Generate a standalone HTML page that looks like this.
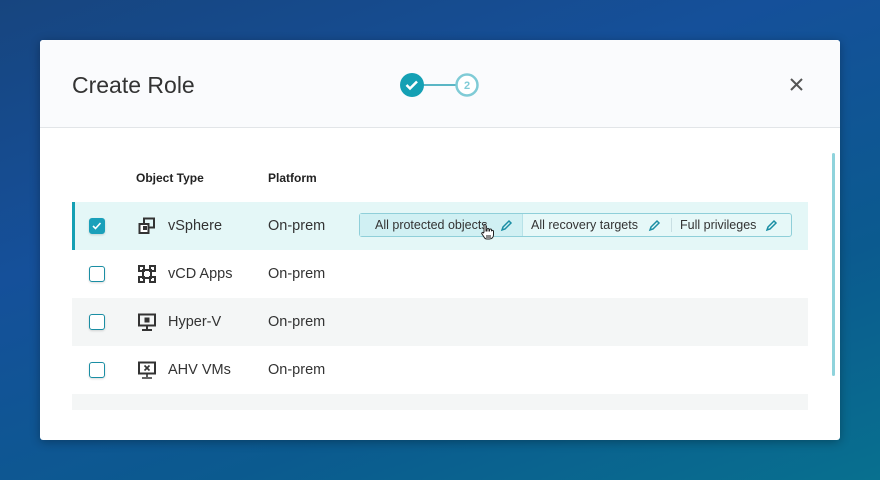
<!DOCTYPE html>
<html><head><style>
*{box-sizing:border-box;margin:0;padding:0}
body{width:880px;height:480px;overflow:hidden;font-family:"Liberation Sans",sans-serif;background:linear-gradient(160deg,#17457f 0%,#15509a 35%,#0b5a8f 70%,#08708f 100%);position:relative}
.modal{position:absolute;left:40px;top:40px;width:800px;height:400px;background:#fff;border-radius:3px;box-shadow:0 2px 10px rgba(0,0,0,.3);overflow:hidden}
.hdr{position:absolute;left:0;top:0;width:800px;height:88px;background:#fafbfd;border-bottom:1px solid #e2e5e8}
.title{position:absolute;left:32px;top:32px;font-size:23px;color:#333;font-weight:300}
.th{position:absolute;top:131px;font-size:12px;font-weight:bold;color:#222}
.row{position:absolute;left:32px;width:736px;height:48px}
.row .t{position:absolute;top:16px;font-size:14.5px;color:#333}
.cb{position:absolute;left:17px;top:16px;width:16px;height:16px;border:1.5px solid #1a8ea4;border-radius:3px;background:#fff;box-shadow:0 1px 2px rgba(0,0,0,.15)}
.ic{position:absolute;left:66px;top:15px}
.chips{position:absolute;left:287px;top:11px;width:433px;height:24px;border:1px solid #8fcfd9;border-radius:3px;font-size:12.5px;color:#333;background:#e6f8f8}
.chips span{position:absolute;top:4px}
</style></head><body>
<div class="modal">
 <div class="hdr">
  <div class="title">Create Role</div>
  <svg style="position:absolute;left:358px;top:31px" width="84" height="28">
   <line x1="24" y1="14" x2="58" y2="14" stroke="#5ab6c5" stroke-width="2"/>
   <circle cx="14" cy="14" r="12" fill="#14a0b4"/>
   <path d="M8.5 14l3.5 3.5 7-7" stroke="#fff" stroke-width="2.5" fill="none"/>
   <circle cx="69" cy="14" r="10.5" fill="#fff" stroke="#7fcbd6" stroke-width="2.5"/>
   <text x="69" y="18" text-anchor="middle" font-size="11" font-weight="bold" fill="#7fcbd6" font-family="Liberation Sans">2</text>
  </svg>
  <svg style="position:absolute;left:750px;top:38px" width="13" height="13"><path d="M1 1l11 11M12 1L1 12" stroke="#555" stroke-width="2"/></svg>
 </div>
 <div class="th" style="left:96px">Object Type</div>
 <div class="th" style="left:228px">Platform</div>

 <div class="row" style="top:162px;background:#e4f7f7;border-left:3px solid #14a0b4">
  <div class="cb" style="left:14px;background:#1aa0ba;border-color:#1aa0ba"><svg width="13" height="13" style="position:absolute;left:0;top:0"><path d="M3 7l2.5 2.5L10.5 4" stroke="#fff" stroke-width="1.6" fill="none"/></svg></div>
  <svg class="ic" style="left:63px" width="18" height="18"><rect x="6" y="1.5" width="10" height="9" fill="none" stroke="#333" stroke-width="2"/><rect x="1.5" y="7" width="9" height="9" fill="#fff" stroke="#333" stroke-width="2"/><rect x="5" y="9" width="4" height="4" fill="#333"/></svg>
  <div class="t" style="left:93px">vSphere</div>
  <div class="t" style="left:193px">On-prem</div>
  <div class="chips" style="left:284px">
   <div style="position:absolute;left:0;top:0;width:163px;height:22px;background:#d0f0f3;border-right:1px solid #b8e2e8"></div>
   <span style="left:15px">All protected objects</span>
   <span style="left:171px">All recovery targets</span>
   <div style="position:absolute;left:311px;top:4px;width:1px;height:14px;background:#c9dfe3"></div>
   <span style="left:320px">Full privileges</span>
   <svg style="position:absolute;left:140px;top:5px" width="13" height="13"><path d="M2 11l1-3 6-6 2 2-6 6z" fill="none" stroke="#1a8ea4" stroke-width="1.5"/></svg>
   <svg style="position:absolute;left:288px;top:5px" width="13" height="13"><path d="M2 11l1-3 6-6 2 2-6 6z" fill="none" stroke="#1a8ea4" stroke-width="1.5"/></svg>
   <svg style="position:absolute;left:405px;top:5px" width="13" height="13"><path d="M2 11l1-3 6-6 2 2-6 6z" fill="none" stroke="#1a8ea4" stroke-width="1.5"/></svg>
   <svg style="position:absolute;left:120px;top:9px" width="14" height="17"><path d="M4 9V2.5a1 1 0 012 0V8h1V6.5a1 1 0 012 0V8h.5V7a1 1 0 012 0v1.3a1 1 0 012 .2V12c0 2-1.5 4-4 4H7c-1.5 0-2.5-1-3-2L2 11a1 1 0 011.6-1.2z" fill="#fff" stroke="#222" stroke-width="1"/><rect x="6" y="12" width="5" height="3" fill="#888"/></svg>
  </div>
 </div>

 <div class="row" style="top:210px">
  <div class="cb"></div>
  <svg class="ic" width="18" height="18"><g fill="none" stroke="#333" stroke-width="2"><rect x="1" y="1" width="5" height="5"/><rect x="12" y="1" width="5" height="5"/><rect x="1" y="12" width="5" height="5"/><rect x="12" y="12" width="5" height="5"/><rect x="5" y="5" width="8" height="8"/></g></svg>
  <div class="t" style="left:96px">vCD Apps</div>
  <div class="t" style="left:196px">On-prem</div>
 </div>
 <div class="row" style="top:258px;background:#f4f6f6">
  <div class="cb"></div>
  <svg class="ic" width="18" height="18"><rect x="1" y="1.5" width="16" height="11" fill="none" stroke="#333" stroke-width="2"/><rect x="6.5" y="4.5" width="5" height="5" fill="#333"/><path d="M9 13v3M4 17h10" stroke="#333" stroke-width="2"/></svg>
  <div class="t" style="left:96px">Hyper-V</div>
  <div class="t" style="left:196px">On-prem</div>
 </div>
 <div class="row" style="top:306px">
  <div class="cb"></div>
  <svg class="ic" width="18" height="18"><rect x="1" y="1.5" width="16" height="11" fill="none" stroke="#333" stroke-width="2"/><path d="M6.5 4.5l5 5M11.5 4.5l-5 5M9 13v3M4 17h10" stroke="#333" stroke-width="1.6"/></svg>
  <div class="t" style="left:96px">AHV VMs</div>
  <div class="t" style="left:196px">On-prem</div>
 </div>
 <div class="row" style="top:354px;height:16px;background:#f4f6f6"></div>
 <div style="position:absolute;left:792px;top:113px;width:3px;height:223px;background:#8fd3dc;border-radius:2px"></div>
</div>
</body></html>
